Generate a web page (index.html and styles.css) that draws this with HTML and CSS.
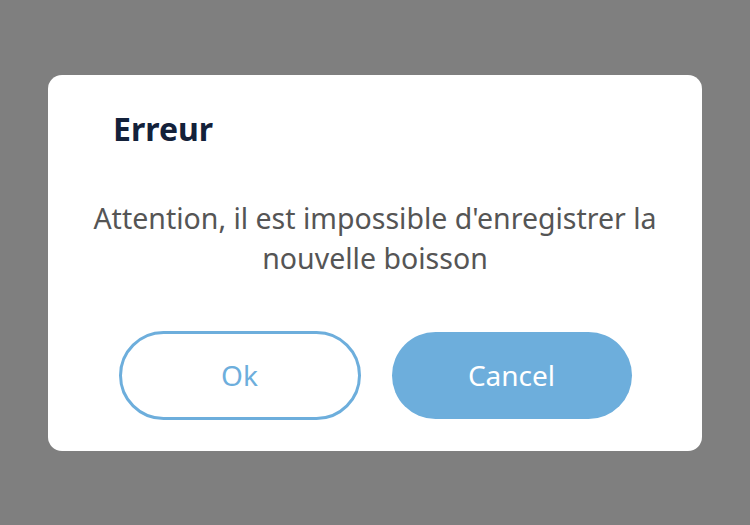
FILE: index.html
```html
<!DOCTYPE html>
<html lang="fr">
<head>
<meta charset="utf-8">
<link rel="stylesheet" href="styles.css">
</head>
<body>
<div class="overlay">
  <div class="dialog">
    <h2 class="title">Erreur</h2>
    <p class="message">Attention, il est impossible d'enregistrer la nouvelle boisson</p>
    <div class="actions">
      <button class="btn btn-outline">Ok</button>
      <button class="btn btn-fill">Cancel</button>
    </div>
  </div>
</div>
</body>
</html>
```

FILE: styles.css
```css
html, body {
  margin: 0;
  padding: 0;
  height: 100%;
}
body {
  background: #7f7f7f;
  font-family: "Noto Sans", "Open Sans", sans-serif;
}
.overlay {
  height: 100%;
  display: flex;
  align-items: center;
  justify-content: center;
}
.dialog {
  width: 654px;
  height: 376px;
  box-sizing: border-box;
  background: #fff;
  border-radius: 14px;
  padding: 29px 0 0;
  display: flex;
  flex-direction: column;
}
.title {
  margin: 0 0 0 65px;
  font-size: 32px;
  line-height: 50px;
  font-weight: 700;
  color: #13213a;
}
.message {
  margin: 44px 30px 0;
  text-align: center;
  font-size: 28.5px;
  line-height: 40px;
  color: #555555;
}
.actions {
  margin-top: 53px;
  display: flex;
  align-items: center;
  justify-content: center;
  gap: 31px;
}
.btn {
  font-family: inherit;
  font-size: 28px;
  width: 242px;
  height: 89px;
  border-radius: 45px;
  box-sizing: border-box;
  cursor: pointer;
}
.btn-outline {
  background: #fff;
  border: 3px solid #6daedc;
  color: #6daedc;
}
.btn-fill {
  background: #6daedc;
  border: none;
  color: #fff;
  width: 240px;
  height: 87px;
}
```
